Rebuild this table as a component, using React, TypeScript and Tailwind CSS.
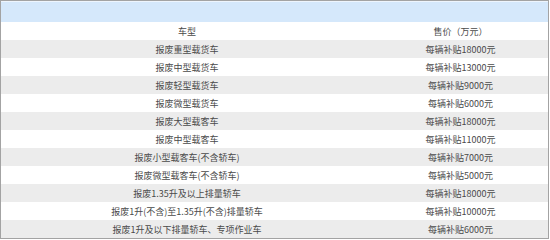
const rows: [string, string][] = [
  ["车型", "售价（万元）"],
  ["报废重型载货车", "每辆补贴18000元"],
  ["报废中型载货车", "每辆补贴13000元"],
  ["报废轻型载货车", "每辆补贴9000元"],
  ["报废微型载货车", "每辆补贴6000元"],
  ["报废大型载客车", "每辆补贴18000元"],
  ["报废中型载客车", "每辆补贴11000元"],
  ["报废小型载客车(不含轿车)", "每辆补贴7000元"],
  ["报废微型载客车(不含轿车)", "每辆补贴5000元"],
  ["报废1.35升及以上排量轿车", "每辆补贴18000元"],
  ["报废1升(不含)至1.35升(不含)排量轿车", "每辆补贴10000元"],
  ["报废1升及以下排量轿车、专项作业车", "每辆补贴6000元"],
];

export default function App() {
  return (
    <div className="w-[550px] h-[240px] bg-white">
      <div
        className="w-[549px] h-[239px] border border-[#a3a3a3] flex flex-col text-[9px] leading-none text-[#4a4a4a]"
        style={{ fontFamily: '"Noto Sans CJK SC", "Noto Sans", sans-serif' }}
      >
        <div className="h-[21px] bg-[#d5e8fb] border-t border-[#eef5fd]" />
        {rows.map(([name, price], i) => (
          <div
            key={name}
            className={`h-[18px] flex items-center ${i % 2 === 1 ? "bg-[#ececec]" : "bg-white"}`}
          >
            <div className="w-[372px] text-center whitespace-nowrap">{name}</div>
            <div className="w-[175px] text-center whitespace-nowrap">{price}</div>
          </div>
        ))}
      </div>
    </div>
  );
}
